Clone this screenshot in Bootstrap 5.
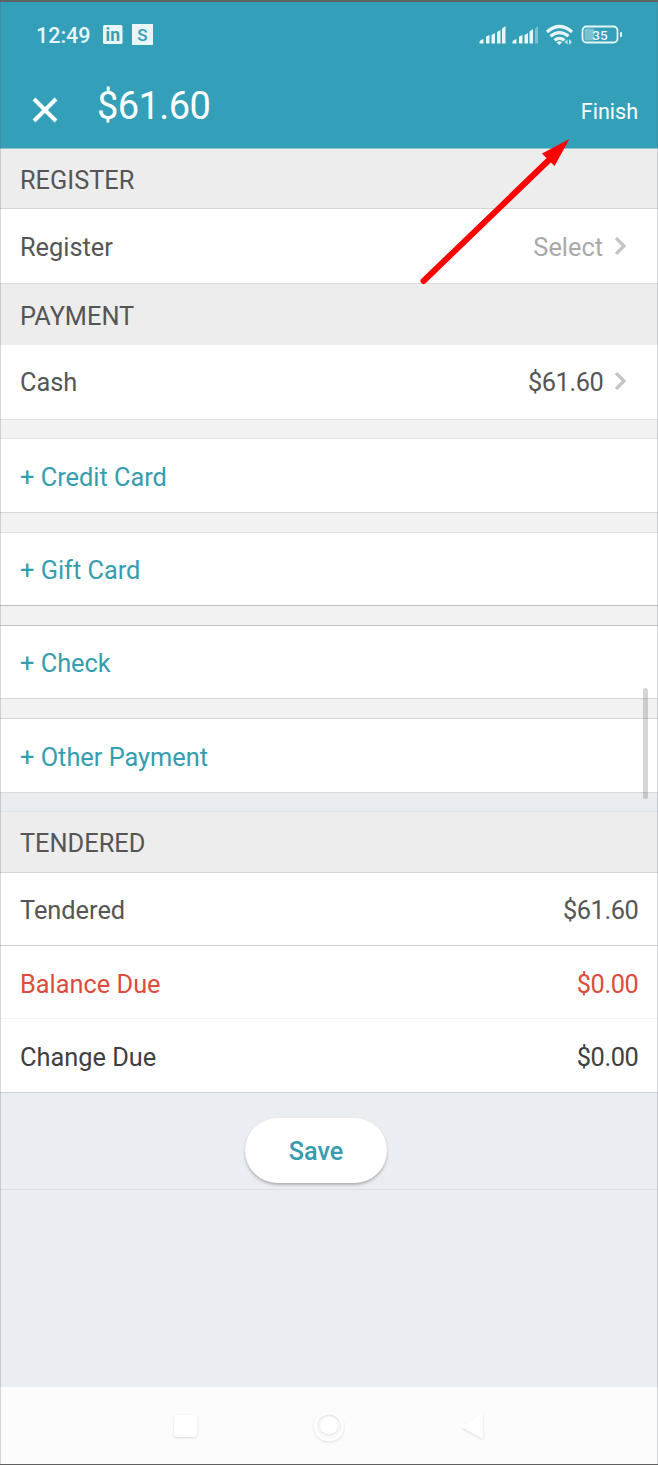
<!DOCTYPE html>
<html lang="en">
<head>
<meta charset="utf-8">
<meta name="viewport" content="width=device-width, initial-scale=1">
<title>Payment</title>
<link href="https://cdn.jsdelivr.net/npm/bootstrap@5.3.0/dist/css/bootstrap.min.css" rel="stylesheet">
<style>
  body { font-family: Roboto, "Liberation Sans", sans-serif; font-size: 25.35px; line-height: 30px; color: #555; background: #eaedf1; }
  .screen { height: 1465px; border-top: 2px solid #5f6364; border-bottom: 1px solid #5f5f5f; }
  .screen::after { content: ""; position: absolute; inset: 0; border: solid rgba(90,100,110,.25); border-width: 0 1px; pointer-events: none; }
  .app-head { height: 147px; background: #339fb8; color: #fff; border-bottom: 1px solid #93c6d3; }
  .status { height: 66px; padding: 0 35px 0 36px; color: #e8f6f8; }
  .clock { font-size: 21.5px; font-weight: 500; width: 67px; padding-top: 2px; }
  .title-row { height: 80px; padding: 0 20px 0 31px; }
  .amount { font-size: 38px; line-height: 44px; letter-spacing: -.6px; margin: -4px 0 0 39px; }
  .finish { font-size: 21.5px; margin-top: 7px; }
  .group-head { height: 60px; background: #ededed; border-bottom: 1px solid #d5d5d5; }
  .line { height: 74px; background: #fff; border-bottom: 1px solid #d9d9d9; }
  .group-head, .line { padding: 3px 20px 0; flex: none; }
  .line.up { padding-top: 1px; }
  .money { letter-spacing: -.4px; margin-right: -.4px; }
  .spacer { flex: none; height: 20px; background: #f2f2f2; border-bottom: 1px solid #e2e2e2; }
  .accent { color: #369db0; }
  .due { color: #dd4c3d; }
  .dark { color: #404040; }
  .pale { color: #a9a9a9; }
  .chev { margin: -2px 11px 0 11px; }
  .save-area { flex: none; height: 97px; border-bottom: 1px solid #dce0e4; padding: 25px 26px 0 0; }
  .btn-save { width: 142px; height: 65px; padding: 9px 0 6px; font-size: 25.2px; font-weight: 500; color: #369db0; background: #fff; border: 0; box-shadow: 0 2px 3px rgba(0,0,0,.25); }
  .sysnav { height: 77px; background: #fcfcfc; }
  .scroll-thumb { width: 5px; height: 111px; right: 10px; top: 686px; background: rgba(100,100,100,.27); }
  .pointer { left: 0; top: 0; pointer-events: none; }
</style>
</head>
<body>
<div class="screen position-relative d-flex flex-column overflow-hidden">
  <header class="app-head flex-shrink-0">
    <div class="status d-flex align-items-center">
      <span class="clock">12:49</span>
      <svg width="50" height="22" viewBox="0 0 50 22">
        <rect x="0" y="1" width="19.5" height="19" rx="1.5" fill="#e8f6f8"/>
        <text x="2.4" y="17" font-size="17.5" font-weight="700" textLength="14.6" fill="#339fb8">in</text>
        <rect x="29" y="0" width="21" height="21" fill="#e8f6f8"/>
        <text x="39.5" y="16.500" font-size="17" font-weight="500" text-anchor="middle" fill="#339fb8">S</text>
      </svg>
      <svg class="ms-auto" width="144" height="24" viewBox="479 22.500 144 24" fill="#e8f6f8">
        <path d="M479.500 43v-2q1-2 4-2.500v4.500zM486 43v-7l3.500-1.500V43zM491.500 43v-8.500l3.500-2V43zM497 43V31.500l3.500-2V43zM502 43V28l3.500-2.500V43z"/>
        <path d="M512.500 43v-2q1-2 4-2.500v4.500zM519 43v-7l3.500-1.500V43zM524.500 43v-8.500l3.500-2V43zM529.500 43V31l3.500-2.500V43z"/>
        <path d="M535 43V28l3-2.500V43z" opacity=".4"/>
        <g fill="none" stroke="#e8f6f8" stroke-width="3.200">
          <path d="M547 31.500q12.500-11 25 0M550.500 35.800q9-7.500 18 0M554.500 39.800q5-4 10 0"/>
        </g>
        <path d="M556.500 42q3-2.300 5.500 0L559.300 44.500z"/>
        <path d="M564.500 41.500l3-2.500v5zM569 38.500l3 3-3 3z" opacity=".8"/>
        <rect x="582.500" y="26" width="35" height="16" rx="4" fill="none" stroke="#e8f6f8" stroke-width="1.800"/>
        <path d="M586 28h8v12h-8q-1.500 0-1.500-1.500v-9q0-1.500 1.500-1.500z" opacity=".4"/>
        <rect x="620" y="31.500" width="2" height="5" rx="1"/>
        <text x="600" y="39.300" font-size="13.500" font-weight="500" text-anchor="middle">35</text>
      </svg>
    </div>
    <div class="title-row d-flex align-items-center">
      <svg width="27" height="26" viewBox="0 0 27 26" style="margin-top:4px"><path d="M3 2L25 24M25 2L3 24" stroke="#fff" stroke-width="4"/></svg>
      <span class="amount">$61.60</span>
      <span class="finish ms-auto">Finish</span>
    </div>
  </header>

  <div class="group-head d-flex align-items-center">REGISTER</div>
  <div class="line up d-flex align-items-center" style="height:75px">
    <span>Register</span><span class="pale ms-auto">Select</span>
    <svg class="chev" width="13" height="18" viewBox="0 0 13 18"><path d="M2 1l8 8L2 17" fill="none" stroke="#c4c4c4" stroke-width="3.200"/></svg>
  </div>
  <div class="group-head d-flex align-items-center" style="height:61px;border-color:#ededed">PAYMENT</div>
  <div class="line up d-flex align-items-center" style="height:75px;border-color:#e5e5e5;padding-top:0">
    <span>Cash</span><span class="money ms-auto">$61.60</span>
    <svg class="chev" width="13" height="18" viewBox="0 0 13 18"><path d="M2 1l8 8L2 17" fill="none" stroke="#c4c4c4" stroke-width="3.200"/></svg>
  </div>
  <div class="spacer" style="height:19px"></div>
  <div class="line accent d-flex align-items-center">+ Credit Card</div>
  <div class="spacer"></div>
  <div class="line up accent d-flex align-items-center" style="height:73px;border-color:#bdbdbd">+ Gift Card</div>
  <div class="spacer" style="border-color:#c4c4c4"></div>
  <div class="line up accent d-flex align-items-center" style="height:73px">+ Check</div>
  <div class="spacer" style="border-color:#d5d5d5"></div>
  <div class="line accent d-flex align-items-center">+ Other Payment</div>
  <div class="spacer" style="height:19px;background:#e9edf1;border-color:#dfe3e7"></div>
  <div class="group-head d-flex align-items-center" style="height:61px;padding-top:2px">TENDERED</div>
  <div class="line up d-flex align-items-center justify-content-between" style="height:73px;border-color:#cfcfcf"><span>Tendered</span><span class="money">$61.60</span></div>
  <div class="line due d-flex align-items-center justify-content-between" style="height:73px;border-color:#f3f3f3"><span>Balance Due</span><span class="money">$0.00</span></div>
  <div class="line dark d-flex align-items-center justify-content-between" style="border-color:#d0d4d8"><span>Change Due</span><span class="money">$0.00</span></div>

  <div class="save-area d-flex justify-content-center align-items-start">
    <button class="btn btn-save rounded-pill">Save</button>
  </div>

  <nav class="sysnav mt-auto flex-shrink-0">
    <svg width="658" height="77" viewBox="0 1387 658 77" class="d-block" fill="#fff" stroke="none">
      <g style="filter:drop-shadow(0 1px 1px rgba(0,0,0,.13))">
        <rect x="174" y="1415" width="23" height="22" rx="3"/>
        <circle cx="329" cy="1426.500" r="13.500" fill="none" stroke="#fff" stroke-width="3"/>
        <circle cx="329" cy="1425.500" r="9"/>
        <path d="M461 1427l22-14v26z"/>
      </g>
    </svg>
  </nav>

  <div class="scroll-thumb position-absolute rounded-pill"></div>
  <svg class="pointer position-absolute" width="658" height="300" viewBox="0 2 658 300">
    <path d="M423.500 281L550 159" stroke="#f00" stroke-width="6" stroke-linecap="round"/>
    <path d="M569.500 139L542 153.500L554.500 166z" fill="#f00"/>
  </svg>
</div>
<script src="https://cdn.jsdelivr.net/npm/bootstrap@5.3.0/dist/js/bootstrap.bundle.min.js"></script>
</body>
</html>
